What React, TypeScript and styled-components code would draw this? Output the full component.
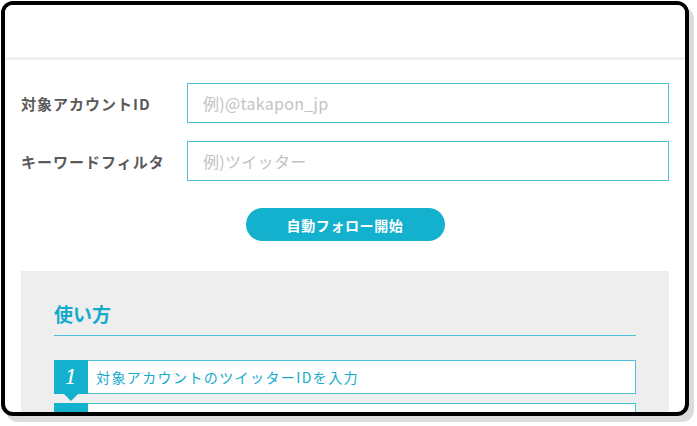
import React from 'react';
import styled, { createGlobalStyle } from 'styled-components';

const GlobalStyle = createGlobalStyle`
  html, body {
    margin: 0;
    padding: 0;
    background: #ffffff;
  }
  body {
    font-family: "Noto Sans CJK JP", "Noto Sans", sans-serif;
  }
`;

const Stage = styled.div`
  padding: 1px 0 0 1px;
  width: 697px;
  height: 426px;
  box-sizing: border-box;
`;

const Device = styled.div`
  width: 688px;
  height: 415px;
  box-sizing: border-box;
  border: 4px solid #000;
  border-radius: 12px;
  box-shadow: 5px 6px 0 #dcdcdc;
  overflow: hidden;
  background: #fff;
`;

const Header = styled.header`
  height: 52px;
  background: #fff;
  border-bottom: 3px solid #f0f0f0;
`;

const Main = styled.main`
  padding: 23px 16px 0 16px;
`;

const Form = styled.form`
  display: flex;
  flex-direction: column;
  gap: 18px;
`;

const Row = styled.div`
  display: flex;
  align-items: center;
`;

const Label = styled.label`
  width: 166px;
  flex-shrink: 0;
  font-size: 15px;
  font-weight: bold;
  color: #5a5a5a;
  letter-spacing: 1px;
`;

const Input = styled.input`
  flex: 1;
  height: 40px;
  box-sizing: border-box;
  border: 1px solid #4cc1d8;
  padding: 0 0 0 15px;
  font-family: "Noto Sans CJK JP", "Noto Sans", sans-serif;
  font-size: 16px;
  letter-spacing: 0.3px;
  color: #333;
  outline: none;

  &::placeholder {
    color: #c3c3c3;
  }
`;

const ButtonWrap = styled.div`
  display: flex;
  justify-content: center;
  margin-top: 9px;
`;

const StartButton = styled.button`
  width: 199px;
  height: 33px;
  border: none;
  border-radius: 17px;
  background: #14b1cf;
  color: #fff;
  font-family: "Noto Sans CJK JP", "Noto Sans", sans-serif;
  font-size: 14px;
  font-weight: bold;
  letter-spacing: 0.6px;
  cursor: pointer;
`;

const HowTo = styled.section`
  margin-top: 30px;
  background: #eeeeee;
  padding: 28px 33px 0 33px;
  height: 200px;
`;

const HowToTitle = styled.h2`
  margin: 0 0 24px;
  padding-bottom: 6px;
  border-bottom: 1px solid #4cc1d8;
  color: #14aacb;
  font-size: 19px;
  font-weight: bold;
  line-height: 30px;
`;

const Steps = styled.ol`
  list-style: none;
  margin: 0;
  padding: 0;
  display: flex;
  flex-direction: column;
  gap: 9px;
`;

const Step = styled.li`
  display: flex;
  height: 34px;
  box-sizing: border-box;
  border: 1px solid #4cc1d8;
  background: #fff;
`;

const StepNumber = styled.span`
  position: relative;
  width: 34px;
  margin: -1px 0 -1px -1px;
  background: #14b1cf;
  color: #fff;
  font-family: "DejaVu Serif", serif;
  font-style: italic;
  font-size: 20px;
  display: flex;
  align-items: center;
  justify-content: center;

  &::after {
    content: '';
    position: absolute;
    left: 50%;
    bottom: -7px;
    margin-left: -7px;
    border-left: 7px solid transparent;
    border-right: 7px solid transparent;
    border-top: 7px solid #14b1cf;
  }
`;

const StepText = styled.span`
  display: flex;
  align-items: center;
  padding-left: 8px;
  color: #14aacb;
  font-size: 14px;
  font-weight: 400;
  letter-spacing: 1.4px;
`;

const steps = [
  '対象アカウントのツイッターIDを入力',
  'キーワードフィルタを入力',
];

export default function App() {
  return (
    <>
      <GlobalStyle />
      <Stage>
        <Device>
          <Header />
          <Main>
            <Form onSubmit={(e) => e.preventDefault()}>
              <Row>
                <Label htmlFor="account">対象アカウントID</Label>
                <Input id="account" placeholder="例)@takapon_jp" />
              </Row>
              <Row>
                <Label htmlFor="keyword">キーワードフィルタ</Label>
                <Input id="keyword" placeholder="例)ツイッター" />
              </Row>
              <ButtonWrap>
                <StartButton type="submit">自動フォロー開始</StartButton>
              </ButtonWrap>
            </Form>
            <HowTo>
              <HowToTitle>使い方</HowToTitle>
              <Steps>
                {steps.map((text, i) => (
                  <Step key={i}>
                    <StepNumber>{i + 1}</StepNumber>
                    <StepText>{text}</StepText>
                  </Step>
                ))}
              </Steps>
            </HowTo>
          </Main>
        </Device>
      </Stage>
    </>
  );
}
